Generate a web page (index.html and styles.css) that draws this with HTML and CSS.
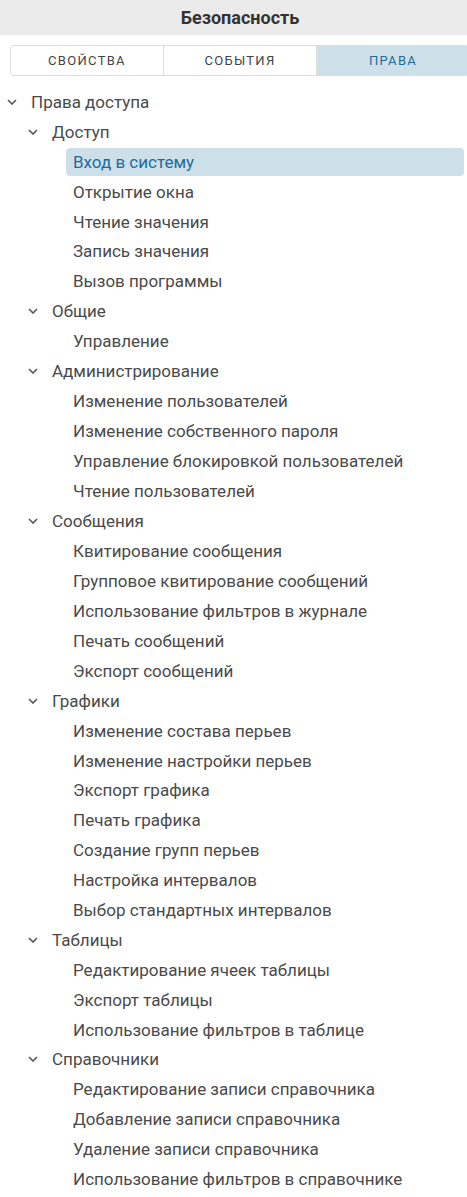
FILE: index.html
```html
<!DOCTYPE html>
<html lang="ru">
<head>
<meta charset="utf-8">
<title>Безопасность</title>
<link rel="stylesheet" href="styles.css">
</head>
<body>
<div class="panel">
  <div class="header">Безопасность</div>
  <div class="tabs">
    <div class="tab">Свойства</div>
    <div class="tab">События</div>
    <div class="tab active">Права</div>
  </div>
  <div class="tree">
    <div class="row l0"><span class="tog"><svg viewBox="0 0 10 6"><path d="M1 1 L5 5 L9 1"/></svg></span><span class="lbl">Права доступа</span></div>

    <div class="row l1"><span class="tog"><svg viewBox="0 0 10 6"><path d="M1 1 L5 5 L9 1"/></svg></span><span class="lbl">Доступ</span></div>
    <div class="row l2"><span class="tog"></span><span class="lbl sel">Вход в систему</span></div>
    <div class="row l2"><span class="tog"></span><span class="lbl">Открытие окна</span></div>
    <div class="row l2"><span class="tog"></span><span class="lbl">Чтение значения</span></div>
    <div class="row l2"><span class="tog"></span><span class="lbl">Запись значения</span></div>
    <div class="row l2"><span class="tog"></span><span class="lbl">Вызов программы</span></div>

    <div class="row l1"><span class="tog"><svg viewBox="0 0 10 6"><path d="M1 1 L5 5 L9 1"/></svg></span><span class="lbl">Общие</span></div>
    <div class="row l2"><span class="tog"></span><span class="lbl">Управление</span></div>

    <div class="row l1"><span class="tog"><svg viewBox="0 0 10 6"><path d="M1 1 L5 5 L9 1"/></svg></span><span class="lbl">Администрирование</span></div>
    <div class="row l2"><span class="tog"></span><span class="lbl">Изменение пользователей</span></div>
    <div class="row l2"><span class="tog"></span><span class="lbl">Изменение собственного пароля</span></div>
    <div class="row l2"><span class="tog"></span><span class="lbl">Управление блокировкой пользователей</span></div>
    <div class="row l2"><span class="tog"></span><span class="lbl">Чтение пользователей</span></div>

    <div class="row l1 gap"><span class="tog"><svg viewBox="0 0 10 6"><path d="M1 1 L5 5 L9 1"/></svg></span><span class="lbl">Сообщения</span></div>
    <div class="row l2"><span class="tog"></span><span class="lbl">Квитирование сообщения</span></div>
    <div class="row l2"><span class="tog"></span><span class="lbl">Групповое квитирование сообщений</span></div>
    <div class="row l2"><span class="tog"></span><span class="lbl">Использование фильтров в журнале</span></div>
    <div class="row l2"><span class="tog"></span><span class="lbl">Печать сообщений</span></div>
    <div class="row l2"><span class="tog"></span><span class="lbl">Экспорт сообщений</span></div>

    <div class="row l1"><span class="tog"><svg viewBox="0 0 10 6"><path d="M1 1 L5 5 L9 1"/></svg></span><span class="lbl">Графики</span></div>
    <div class="row l2"><span class="tog"></span><span class="lbl">Изменение состава перьев</span></div>
    <div class="row l2"><span class="tog"></span><span class="lbl">Изменение настройки перьев</span></div>
    <div class="row l2"><span class="tog"></span><span class="lbl">Экспорт графика</span></div>
    <div class="row l2"><span class="tog"></span><span class="lbl">Печать графика</span></div>
    <div class="row l2"><span class="tog"></span><span class="lbl">Создание групп перьев</span></div>
    <div class="row l2"><span class="tog"></span><span class="lbl">Настройка интервалов</span></div>
    <div class="row l2"><span class="tog"></span><span class="lbl">Выбор стандартных интервалов</span></div>

    <div class="row l1"><span class="tog"><svg viewBox="0 0 10 6"><path d="M1 1 L5 5 L9 1"/></svg></span><span class="lbl">Таблицы</span></div>
    <div class="row l2"><span class="tog"></span><span class="lbl">Редактирование ячеек таблицы</span></div>
    <div class="row l2"><span class="tog"></span><span class="lbl">Экспорт таблицы</span></div>
    <div class="row l2"><span class="tog"></span><span class="lbl">Использование фильтров в таблице</span></div>

    <div class="row l1"><span class="tog"><svg viewBox="0 0 10 6"><path d="M1 1 L5 5 L9 1"/></svg></span><span class="lbl">Справочники</span></div>
    <div class="row l2"><span class="tog"></span><span class="lbl">Редактирование записи справочника</span></div>
    <div class="row l2"><span class="tog"></span><span class="lbl">Добавление записи справочника</span></div>
    <div class="row l2"><span class="tog"></span><span class="lbl">Удаление записи справочника</span></div>
    <div class="row l2"><span class="tog"></span><span class="lbl">Использование фильтров в справочнике</span></div>
  </div>
</div>
</body>
</html>
```

FILE: styles.css
```css
html, body {
  margin: 0;
  padding: 0;
  background: #ffffff;
  overflow: hidden;
}
body {
  font-family: Roboto, "Noto Sans", "Liberation Sans", sans-serif;
  color: #4a4a4a;
}
.panel {
  width: 480px;
}
.header {
  height: 35px;
  background: #ebebeb;
  display: flex;
  align-items: center;
  justify-content: center;
  font-weight: 700;
  font-size: 18px;
  color: #333333;
}
.tabs {
  display: flex;
  margin: 10px 10px 0 10px;
  height: 31px;
  box-sizing: border-box;
  border: 1px solid #dddddd;
  border-radius: 4px;
  overflow: hidden;
}
.tab {
  flex: 1;
  display: flex;
  align-items: center;
  justify-content: center;
  font-size: 13px;
  letter-spacing: 1.3px;
  text-transform: uppercase;
  color: #444444;
}
.tab + .tab {
  border-left: 1px solid #dddddd;
}
.tab.active {
  background: #cde0ea;
  color: #1f6b9c;
}
.tree {
  padding-top: 11px;
}
.row {
  display: flex;
  align-items: center;
  height: 29.9px;
  font-size: 17px;
}
.row.gap {
  margin-top: 1px;
}
.l0 { padding-left: 0; }
.l1 { padding-left: 21px; }
.l2 { padding-left: 42px; }
.tog {
  width: 24px;
  flex: none;
  display: flex;
  align-items: center;
  justify-content: center;
}
.tog svg {
  width: 10px;
  height: 6px;
  fill: none;
  stroke: #555555;
  stroke-width: 1.6;
}
.lbl {
  flex: 1;
  height: 28px;
  line-height: 28px;
  padding-left: 7px;
  margin-right: 16px;
  border-radius: 4px;
  white-space: nowrap;
}
.lbl.sel {
  background: #cde0ea;
  color: #1f6b9c;
}
```
